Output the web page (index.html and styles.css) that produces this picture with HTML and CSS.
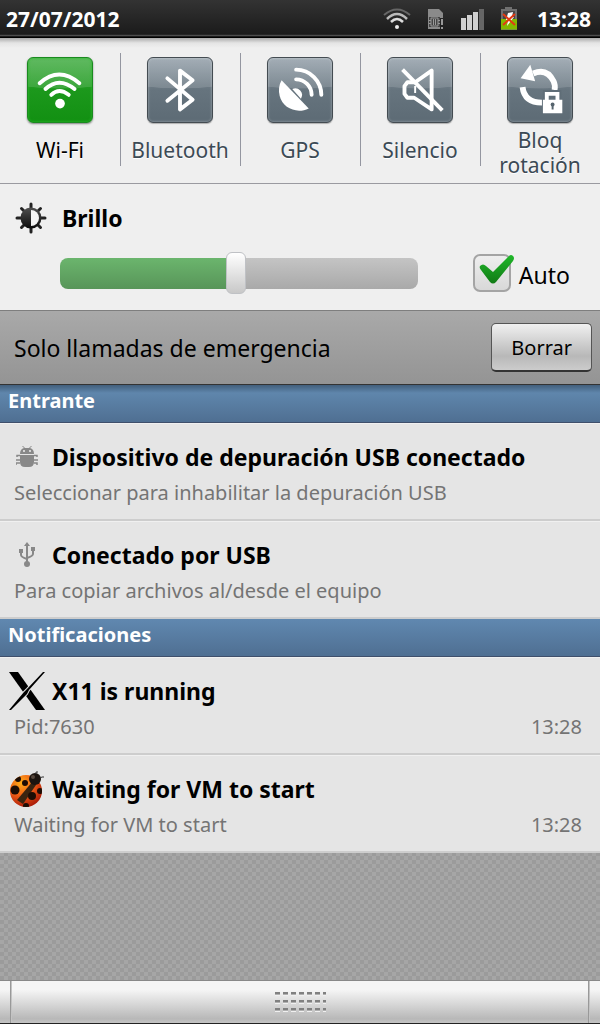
FILE: index.html
```html
<!DOCTYPE html>
<html lang="es">
<head>
<meta charset="utf-8">
<meta name="viewport" content="width=device-width, initial-scale=1">
<title>Panel de notificaciones</title>
<link rel="stylesheet" href="styles.css">
</head>
<body>
<header class="status">
  <time class="status-date">27/07/2012</time>
  <div class="status-icons">
    <svg width="28" height="22" viewBox="0 0 28 22" fill="none" stroke-width="2" aria-hidden="true">
      <path d="M1 7Q14-4 27 7" stroke="#666"/><path d="M4 11Q14 1 24 11" stroke="#bbb" stroke-width="2.500"/><path d="M8 14Q14 8 20 14" stroke="#ddd" stroke-width="2.500"/><circle cx="14" cy="19" r="2" fill="#eee"/>
    </svg>
    <svg width="17" height="22" viewBox="0 0 17 22" aria-hidden="true">
      <path d="M1 1h11l4 4v5h-3v11H1z" fill="#8a8a8a"/><path d="M2 9h11v10H2z" fill="#444"/><path d="M4 10h7v8H4z" fill="none" stroke="#999"/><path d="M6.500 11v6M8.500 11v6M2 12.500h2M2 15.500h2M11 12.500h2M11 15.500h2" stroke="#999"/><path d="M14 11h2v6h-2zM14 19h2v2h-2z" fill="#999"/>
    </svg>
    <svg width="24" height="22" viewBox="0 0 24 22" aria-hidden="true">
      <path d="M1 10h5v12H1zM7 7h5v15H7zM13 4h5v18h-5z" fill="#d0d0d0"/><path d="M19 1h5v21h-5z" fill="#666"/>
    </svg>
    <svg width="18" height="24" viewBox="0 0 18 24" aria-hidden="true">
      <path d="M5 0h7v2h5v21H1V2h4z" fill="#707070"/><path d="M3 4h12v8H3z" fill="#484848"/><path d="M1 12h16v10.500H1z" fill="#82b800"/><path d="M8 6l5-1-1 5 2 0-7 9 1-6H6z" fill="#fff"/><path d="M3 7l12 11M15 7L3 18" stroke="#e33a12" stroke-width="2"/>
    </svg>
  </div>
  <time class="status-clock">13:28</time>
</header>

<main class="panel">
  <section class="toggles" aria-label="Ajustes rápidos">
    <button class="toggle toggle-on" type="button" aria-pressed="true">
      <svg class="tile" viewBox="0 0 66 66" aria-hidden="true"><g fill="none" stroke="#fff" stroke-width="4" stroke-linecap="round"><path d="M12 26Q32 8 53 26"/><path d="M18 32Q32 19 48 32"/><path d="M24 38Q32 30 42 38"/></g><circle cx="33" cy="47" r="5" fill="#fff"/></svg>
      <span class="toggle-label">Wi-Fi</span>
    </button>
    <button class="toggle" type="button" aria-pressed="false">
      <svg class="tile" viewBox="0 0 66 66" aria-hidden="true"><path d="M20 21l26 22-13 10V13l13 10-26 21" fill="none" stroke="#fff" stroke-width="4" stroke-linecap="round" stroke-linejoin="round"/></svg>
      <span class="toggle-label">Bluetooth</span>
    </button>
    <button class="toggle" type="button" aria-pressed="false">
      <svg class="tile" viewBox="0 0 66 66" aria-hidden="true"><path d="M14 23L42 52C30 58 15 52 12 39Q10 30 14 23z" fill="#fff"/><path d="M25 32A7 7 0 0 1 34 42z" fill="#fff"/><g fill="none" stroke="#fff" stroke-width="4" stroke-linecap="round"><path d="M29 12A26 26 0 0 1 55 38"/><path d="M29 22A16 16 0 0 1 45 38"/></g></svg>
      <span class="toggle-label">GPS</span>
    </button>
    <button class="toggle" type="button" aria-pressed="false">
      <svg class="tile" viewBox="0 0 66 66" aria-hidden="true"><g fill="none" stroke="#fff" stroke-width="4"><path d="M20 25h8L45 13v40L27 41h-7l-3-4v-8z" stroke-linejoin="round"/><path d="M28 29v7" stroke-width="2"/><path d="M15 12l41 42"/></g></svg>
      <span class="toggle-label">Silencio</span>
    </button>
    <button class="toggle" type="button" aria-pressed="false">
      <svg class="tile" viewBox="0 0 66 66" aria-hidden="true"><path d="M26 16Q40 10 47 24Q49 28 48 33M15 30Q17 46 35 46" fill="none" stroke="#fff" stroke-width="6"/><path d="M23 7l5 17-15-3z" fill="#fff"/><path d="M40 43v-6h11v6" fill="none" stroke="#5f6d77" stroke-width="8"/><path d="M40 44v-7h11v7" fill="none" stroke="#fff" stroke-width="4"/><path d="M36 43h20v14H36z" fill="#fff"/><circle cx="46" cy="48" r="2" fill="#56646e"/><path d="M45 48h2v5h-2z" fill="#56646e"/></svg>
      <span class="toggle-label">Bloq rotación</span>
    </button>
  </section>

  <section class="brightness">
    <div class="brightness-head">
      <svg width="32" height="32" viewBox="0 0 32 32" aria-hidden="true"><defs><linearGradient id="sun" x2="0" y2="1"><stop stop-color="#505050"/><stop offset="1" stop-color="#0a0a0a"/></linearGradient></defs><path d="M16 2v28M2 16h28M6.500 6.500l19 19M25.500 6.500l-19 19" stroke="#222" stroke-width="3" stroke-linecap="round"/><circle cx="16" cy="16" r="10.500" fill="url(#sun)"/><path d="M16 8a8 8 0 0 1 0 16z" fill="#f4f4f4"/></svg>
      <label class="brightness-label" for="level">Brillo</label>
    </div>
    <div class="brightness-row">
      <input class="slider" id="level" type="range" min="0" max="100" value="49">
      <label class="auto">
        <span class="auto-box"><input class="auto-input" type="checkbox" checked><svg class="auto-tick" width="42" height="38" viewBox="0 0 42 38" aria-hidden="true"><defs><linearGradient id="tick" x2="0" y2="1"><stop stop-color="#20b82a"/><stop offset="1" stop-color="#117a15"/></linearGradient></defs><path d="M7 12Q10 9 13 12L20 18 36 2Q38 0 40 2Q42 4 40 7L23 28Q20 31 17 28L8 16Q6 14 7 12z" fill="url(#tick)"/></svg></span>
        <span class="auto-text">Auto</span>
      </label>
    </div>
  </section>

  <section class="carrier">
    <span>Solo llamadas de emergencia</span>
    <button class="clear" type="button">Borrar</button>
  </section>

  <section>
    <h2 class="group group-first">Entrante</h2>
    <article class="note">
      <div class="note-head">
        <span class="note-icon"><svg width="22" height="22" viewBox="0 0 22 22" fill="#888" aria-hidden="true"><path d="M4 8Q4 3 8 2L6 0h1l2 2h4l2-2h1l-2 2Q18 3 18 8zM4 9h14v7q0 5-5 5H9q-5 0-5-5z"/><path d="M1 11V9.500h3M0 14h4M0 19v-2h4M21 11V9.500h-3M22 14h-4M21 19v-2h-3" fill="none" stroke="#888" stroke-width="1.500"/><circle cx="8" cy="5" r="1" fill="#eee"/><circle cx="14" cy="5" r="1" fill="#eee"/></svg></span>
        <h3 class="note-title">Dispositivo de depuración USB conectado</h3>
      </div>
      <p class="note-body"><span>Seleccionar para inhabilitar la depuración USB</span></p>
    </article>
    <article class="note">
      <div class="note-head">
        <span class="note-icon"><svg width="18" height="26" viewBox="0 0 18 26" fill="#888" aria-hidden="true"><path d="M9 0l3 4H6zM1 7h4v4H1zM13 5h4v4h-4z"/><circle cx="9" cy="22" r="3"/><path d="M9 3v19M3 9v4q0 2 6 4M15 8v4q0 2-6 4" fill="none" stroke="#888" stroke-width="2"/></svg></span>
        <h3 class="note-title">Conectado por USB</h3>
      </div>
      <p class="note-body"><span>Para copiar archivos al/desde el equipo</span></p>
    </article>
  </section>

  <section>
    <h2 class="group">Notificaciones</h2>
    <article class="note">
      <div class="note-head">
        <span class="note-icon"><svg width="38" height="38" viewBox="0 0 38 38" aria-hidden="true"><path d="M1 0h9l27 38h-9z"/><path d="M35 0h2L21 18l-2 4L3 38H1l15-18 3-3z" stroke="#e6e6e6" stroke-width="2" paint-order="stroke"/></svg></span>
        <h3 class="note-title">X11 is running</h3>
      </div>
      <p class="note-body"><span>Pid:7630</span><time>13:28</time></p>
    </article>
    <article class="note">
      <div class="note-head">
        <span class="note-icon"><svg width="36" height="36" viewBox="0 0 36 36" aria-hidden="true"><defs><radialGradient id="bug" cx=".35" cy=".25" r=".8"><stop stop-color="#ffae18"/><stop offset=".5" stop-color="#ee5c16"/><stop offset="1" stop-color="#a81808"/></radialGradient><clipPath id="shell"><circle cx="17" cy="20" r="16"/></clipPath></defs><circle cx="17" cy="20" r="16" fill="url(#bug)"/><g clip-path="url(#shell)" fill="#1c0d05"><path d="M24 10L8 29l6 4L27 14z" fill="#3a2410"/><circle cx="6" cy="19" r="4.500"/><circle cx="16" cy="12" r="3"/><circle cx="23" cy="25" r="4"/><circle cx="31" cy="20" r="3"/><circle cx="17" cy="35" r="3"/><circle cx="9" cy="8" r="3"/><circle cx="31" cy="32" r="2"/></g><circle cx="26" cy="8" r="6" fill="#1c1410"/><circle cx="24" cy="6" r="2" fill="#55463d"/><path d="M27 3l0-2 2 0M31 7l2-1 2 0" stroke="#333" fill="none"/></svg></span>
        <h3 class="note-title">Waiting for VM to start</h3>
      </div>
      <p class="note-body"><span>Waiting for VM to start</span><time>13:28</time></p>
    </article>
  </section>
</main>

<button class="handle" type="button" aria-label="Cerrar panel"><span class="grip"></span></button>
</body>
</html>
```
FILE: styles.css
```css
* { box-sizing: border-box; }
body {
  margin: 0;
  min-height: 100vh;
  display: flex;
  flex-direction: column;
  font-family: "Noto Sans", "Open Sans", sans-serif;
  color: #000;
  background: repeating-conic-gradient(#a6a6a6 0 25%, #9b9b9b 0 50%) 0 0 / 8px 8px;
}
button { font: inherit; color: inherit; }
h2, h3, p { margin: 0; }

.status {
  display: flex;
  align-items: center;
  height: 38px;
  padding: 0 9px 0 6px;
  color: #fff;
  font-size: 21px;
  font-weight: 700;
  background: linear-gradient(#333, #1b1b1b 90%, #555 94%, #000 97%);
}
.status-icons {
  display: flex;
  align-items: center;
  gap: 16px;
  margin-left: auto;
}
.status-clock { margin-left: 19px; }

.panel { background: #efefef; }

.toggles {
  display: grid;
  grid-template-columns: repeat(5, 1fr);
  padding: 15px 0 17px;
  border-bottom: 1px solid #9a9aa0;
  background: linear-gradient(#aaa, #e4e4e4 5px, #efefef 10px);
}
.toggle {
  display: flex;
  flex-direction: column;
  align-items: center;
  gap: 5px;
  height: 113px;
  padding: 4px 1px 0 0;
  border: 0;
  border-left: 1px solid #9496a0;
  background: none;
  color: #3c4a55;
  font-size: 21px;
  line-height: 25px;
}
.toggle:first-child { border-left-color: transparent; }
.toggle-on { color: #000; }
.tile {
  flex: none;
  width: 66px;
  height: 66px;
  border: 1px solid #444c52;
  border-radius: 6px;
  background: radial-gradient(ellipse 150% 48% at 50% 0, #fff2 98%, #fff0), linear-gradient(#95a1ab, #66747e 50%, #5d6b75);
  box-shadow: 0 1px 1px #0004, inset 0 0 2px 1px #fff3;
}
.toggle-on .tile {
  border-color: #1b8a20;
  background: radial-gradient(ellipse 150% 48% at 50% 0, #fff2 98%, #fff0), linear-gradient(#48af49, #1c981c 50%, #129012);
  box-shadow: 0 1px 2px #0007, inset 0 0 2px 1px #2cc02c88;
}
.toggle-label {
  display: flex;
  align-items: center;
  justify-content: center;
  flex: none;
  width: 88%;
  min-height: 44px;
  text-align: center;
  text-shadow: 0 1px #fff;
}

.brightness { padding: 18px 30px 16px 15px; }
.brightness-head {
  display: flex;
  align-items: center;
  gap: 15px;
  height: 32px;
}
.brightness-label { font-size: 23px; font-weight: 700; }
.brightness-row {
  display: flex;
  align-items: center;
  gap: 55px;
  margin-top: 18px;
  padding-left: 45px;
}
.slider {
  appearance: none;
  flex: 1;
  min-width: 0;
  height: 42px;
  margin: 0;
  background: none;
}
.slider::-webkit-slider-runnable-track {
  height: 31px;
  border-radius: 8px;
  background: linear-gradient(#6bb56d, #589559) 0 0 / 50% 100% no-repeat, linear-gradient(#c4c4c4, #a9a9a9);
}
.slider::-webkit-slider-thumb {
  appearance: none;
  width: 20px;
  height: 42px;
  margin-top: -6px;
  border: 1px solid #bfc1c5;
  border-radius: 6px;
  background: linear-gradient(#fff, #c8c8c8);
}
.auto {
  display: flex;
  align-items: center;
  gap: 8px;
  font-size: 23px;
}
.auto-text { padding-top: 4px; line-height: 38px; }
.auto-box { position: relative; display: flex; }
.auto-input {
  appearance: none;
  width: 38px;
  height: 38px;
  margin: 0;
  border: 2px solid #a4a4a4;
  border-radius: 7px;
  background: linear-gradient(#eee, #d8d8d8);
}
.auto-tick { position: absolute; left: 0; top: 0; }
.auto-input:not(:checked) + .auto-tick { display: none; }

.carrier {
  display: flex;
  align-items: center;
  justify-content: space-between;
  height: 75px;
  padding: 0 8px 0 14px;
  border-top: 1px solid #7e7e7e;
  border-bottom: 1px solid #333;
  background: linear-gradient(#a9a9a9, #949494);
  font-size: 23px;
}
.clear {
  height: 49px;
  padding: 0 19px;
  border: 1px solid #555;
  border-bottom: 2px solid #333;
  border-radius: 5px;
  background: linear-gradient(#f0f0f0, #b8b8b8 70%, #ccc);
  font-size: 20px;
}

.group {
  height: 38px;
  padding: 2px 8px 0;
  border-bottom: 1px solid #3f4f6b;
  background: linear-gradient(#6088b0, #4f6f92);
  color: #fff;
  font-size: 20px;
  line-height: 28px;
}
.group-first { background: linear-gradient(#425f7c, #5f86ac 8px, #4f6f92); }

.note {
  height: 98px;
  padding: 14px 18px 0 14px;
  border-top: 1px solid #f0f0f0;
  border-bottom: 2px solid #cdcdcd;
  background: #e5e5e5;
}
.note-head { display: flex; align-items: center; height: 38px; gap: 12px; }
.note-icon {
  flex: none;
  display: flex;
  justify-content: center;
  align-items: center;
  width: 26px;
}
.note-icon svg { flex: none; }
.note-title { font-size: 23px; line-height: 36px; white-space: nowrap; }
.note-body {
  display: flex;
  justify-content: space-between;
  color: #747474;
  font-size: 20px;
  line-height: 34px;
}

.handle {
  display: grid;
  place-items: center;
  height: 44px;
  margin-top: auto;
  padding: 0;
  border: 0;
  border-top: 1px solid #898989;
  border-bottom: 1px solid #222;
  background:
    linear-gradient(90deg, #999 1px, #eee 2px) 10px 0 / 2px 100% no-repeat,
    linear-gradient(90deg, #999 1px, #eee 2px) calc(100% - 10px) 0 / 2px 100% no-repeat,
    linear-gradient(#f6f6f6 20%, #b8b8b8 90%, #c4c4c4);
}
.grip {
  width: 51px;
  height: 20px;
  background: repeating-linear-gradient(#808080 0 2px, #b0b0b0 2px 3px, #f0f0f0 3px 4px, transparent 4px 8px);
  mask: repeating-linear-gradient(90deg, #000 0 5px, transparent 5px 8px);
}
```
